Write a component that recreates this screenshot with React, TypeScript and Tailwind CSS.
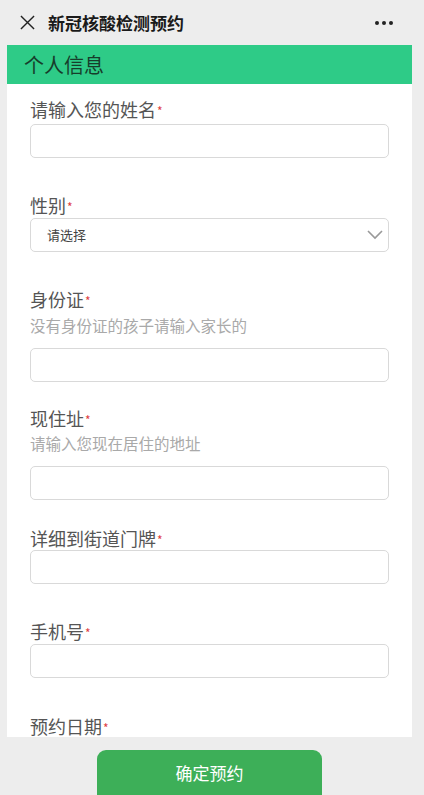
import React from 'react';

// 表单字段
type Field = {
  label: string;
  hint?: string;
  kind: 'input' | 'select';
  top: string; // 距离上一项的间距
  hintTop?: string;
  boxTop: string;
};

const fields: Field[] = [
  { label: '请输入您的姓名', kind: 'input', top: 'mt-[13px]', boxTop: 'mt-[3px]' },
  { label: '性别', kind: 'select', top: 'mt-[35px]', boxTop: 'mt-[1px]' },
  {
    label: '身份证',
    hint: '没有身份证的孩子请输入家长的',
    kind: 'input',
    top: 'mt-[35px]',
    hintTop: 'mt-[3px]',
    boxTop: 'mt-[12px]',
  },
  {
    label: '现住址',
    hint: '请输入您现在居住的地址',
    kind: 'input',
    top: 'mt-[24px]',
    hintTop: 'mt-[2px]',
    boxTop: 'mt-[12px]',
  },
  { label: '详细到街道门牌', kind: 'input', top: 'mt-[26px]', boxTop: 'mt-0' },
  { label: '手机号', kind: 'input', top: 'mt-[35px]', boxTop: 'mt-[1px]' },
];

function Label({ text, tight }: { text: string; tight?: boolean }) {
  return (
    <div className={`text-[18px] ${tight ? 'leading-[18px]' : 'leading-[24px]'} text-[#555]`}>
      {text}
      <span className="text-[12px] text-[#e0403f] align-top relative top-[2px] ml-[1px]">*</span>
    </div>
  );
}

export default function App() {
  return (
    <div
      className="w-[424px] h-[795px] bg-[#ededed] flex flex-col"
      style={{ fontFamily: '"Noto Sans CJK SC", "Noto Sans", sans-serif' }}
    >
      {/* 顶部导航 */}
      <div className="h-[45px] shrink-0 flex items-center px-[20px]">
        <svg className="w-[15px] h-[15px]" viewBox="0 0 16 16" fill="none" stroke="#222" strokeWidth={1.5}>
          <path d="M1 1l14 14M15 1L1 15" />
        </svg>
        <div className="ml-[13px] text-[17px] font-bold text-[#1a1a1a]">新冠核酸检测预约</div>
        <div className="ml-auto flex items-center gap-[3px] mr-[11px]">
          <span className="w-[4px] h-[4px] rounded-full bg-[#222]"></span>
          <span className="w-[4px] h-[4px] rounded-full bg-[#222]"></span>
          <span className="w-[4px] h-[4px] rounded-full bg-[#222]"></span>
        </div>
      </div>

      {/* 内容区 */}
      <div className="flex-1 ml-[7px] mr-[12px] bg-white">
        <div className="h-[39px] bg-[#2ecb87] flex items-center px-[17px] text-[20px] text-[#173d2b]">
          个人信息
        </div>
        <div className="pl-[23px] pr-[23px]">
          {fields.map((f, i) => (
            <div key={i} className={f.top}>
              <Label text={f.label} />
              {f.hint && (
                <div className={`${f.hintTop} text-[15.5px] leading-[22px] text-[#a9a9a9]`}>{f.hint}</div>
              )}
              {f.kind === 'input' ? (
                <div className={`${f.boxTop} h-[34px] rounded-[5px] border border-[#d9d9d9] bg-white`}></div>
              ) : (
                <div
                  className={`${f.boxTop} h-[34px] rounded-[5px] border border-[#d9d9d9] bg-white flex items-center pl-[16px] pr-[4px]`}
                >
                  <span className="text-[13px] text-[#444]">请选择</span>
                  <svg className="ml-auto w-[18px] h-[12px]" viewBox="0 0 18 12" fill="none" stroke="#999" strokeWidth={1.6}>
                    <path d="M2 2l7 7 7-7" />
                  </svg>
                </div>
              )}
            </div>
          ))}
          <div className="mt-[39px]">
            <Label text="预约日期" tight />
          </div>
        </div>
      </div>

      {/* 底部按钮 */}
      <div className="h-[58px] shrink-0 pt-[13px] pl-[7px] pr-[12px] flex justify-center">
        <button className="w-[225px] h-[45px] rounded-t-[9px] bg-[#3daf58] text-white text-[17px]">
          确定预约
        </button>
      </div>
    </div>
  );
}
